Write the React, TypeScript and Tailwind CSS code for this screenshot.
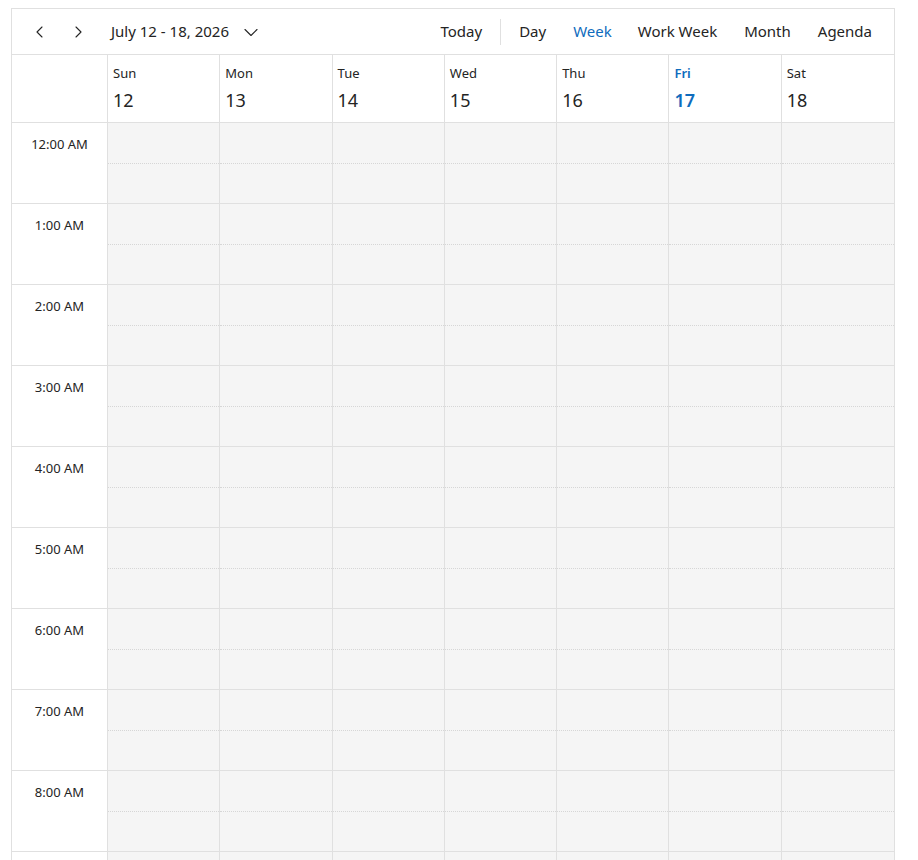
import React from "react";

const days = [
  { name: "Sun", num: 12 },
  { name: "Mon", num: 13 },
  { name: "Tue", num: 14 },
  { name: "Wed", num: 15 },
  { name: "Thu", num: 16 },
  { name: "Fri", num: 17, today: true },
  { name: "Sat", num: 18 },
];

const hours = [
  "12:00 AM",
  "1:00 AM",
  "2:00 AM",
  "3:00 AM",
  "4:00 AM",
  "5:00 AM",
  "6:00 AM",
  "7:00 AM",
  "8:00 AM",
  "",
];

const Chevron = ({ dir }: { dir: "left" | "right" | "down" }) => {
  const d =
    dir === "left"
      ? "M10 3 L5 8 L10 13"
      : dir === "right"
      ? "M6 3 L11 8 L6 13"
      : "M2 5.5 L8 11.5 L14 5.5";
  return (
    <svg width="16" height="16" viewBox="0 0 16 16" fill="none">
      <path d={d} stroke="#242424" strokeWidth="1.1" strokeLinecap="round" strokeLinejoin="round" />
    </svg>
  );
};

export default function App() {
  const cols = "grid grid-cols-[96px_repeat(7,minmax(0,1fr))]";
  return (
    <div
      className="bg-white h-[860px] overflow-hidden pt-[8px] pl-[11px] text-[#242424]"
      style={{ fontFamily: '"Noto Sans", "Open Sans", sans-serif' }}
    >
      <div className="w-[884px] border border-[#e0e0e0]">
        {/* Toolbar */}
        <div className="h-[46px] flex items-center border-b border-[#e0e0e0] text-[15px]">
          <div className="flex items-center pl-[9px]">
            <button className="w-[38px] h-[32px] flex items-center justify-center">
              <Chevron dir="left" />
            </button>
            <button className="w-[38px] h-[32px] flex items-center justify-center">
              <Chevron dir="right" />
            </button>
            <div className="flex items-center ml-[14px] gap-[14px]">
              <span>July 12 - 18, 2026</span>
              <Chevron dir="down" />
            </div>
          </div>
          <div className="ml-auto flex items-center pr-[22px]">
            <span>Today</span>
            <div className="w-px h-[26px] bg-[#e0e0e0] ml-[18px] mr-[18px]" />
            <span>Day</span>
            <span className="ml-[27px] text-[#0f6cbd]">Week</span>
            <span className="ml-[26px]">Work Week</span>
            <span className="ml-[27px]">Month</span>
            <span className="ml-[27px]">Agenda</span>
          </div>
        </div>

        {/* Header */}
        <div className={`${cols} border-b border-[#e0e0e0]`}>
          <div className="border-r border-[#e0e0e0] h-[67px]" />
          {days.map((d, i) => (
            <div
              key={d.name}
              className={`h-[67px] pl-[5px] pt-[10px] ${i < 6 ? "border-r border-[#e0e0e0]" : ""} ${
                d.today ? "text-[#0f6cbd] font-semibold" : ""
              }`}
            >
              <div className="text-[13px] leading-[17px]">{d.name}</div>
              <div className="text-[18px] leading-[24px] mt-[6px]">{d.num}</div>
            </div>
          ))}
        </div>

        {/* Grid */}
        <div>
          {hours.map((h, idx) => (
            <div key={idx} className={`${cols} border-b border-[#e0e0e0]`}>
              <div className="h-[80px] border-r border-[#e0e0e0] text-[13px] text-center pt-[12px]">
                {h}
              </div>
              {days.map((d, i) => (
                <div
                  key={d.name}
                  className={`h-[80px] bg-[#f5f5f5] ${i < 6 ? "border-r border-[#e0e0e0]" : ""}`}
                >
                  <div className="h-[41px] border-b border-dotted border-[#d6d6d6]" />
                </div>
              ))}
            </div>
          ))}
        </div>
      </div>
    </div>
  );
}
